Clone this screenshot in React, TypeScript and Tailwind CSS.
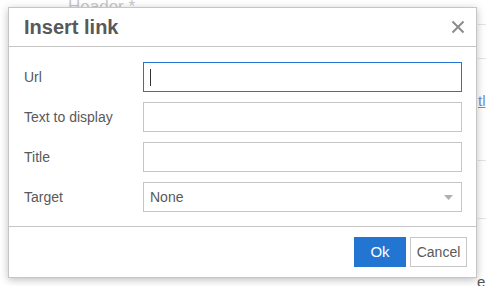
import React from "react";

export default function App() {
  return (
    <div className="relative h-[286px] w-[486px] overflow-hidden bg-white font-['Liberation_Sans',Arial,sans-serif]">
      {/* page behind the dialog */}
      <div className="absolute left-[68px] top-[-6px] text-[17px] text-[#c8c8c8]">Header *</div>
      <div className="absolute left-[478px] top-[24px] h-px w-[8px] bg-[#e4e4e4]" />
      <div className="absolute left-[478px] top-[58px] h-px w-[8px] bg-[#e4e4e4]" />
      <div className="absolute left-[478px] top-[160px] h-px w-[8px] bg-[#e4e4e4]" />
      <div className="absolute left-[478px] top-[218px] h-px w-[8px] bg-[#e4e4e4]" />
      <div className="absolute left-[478px] top-[90px] text-[15px] text-[#6b8fe0] underline">tl</div>
      <div className="absolute left-[477px] top-[271px] text-[15px] text-[#555]">e</div>

      {/* dialog */}
      <div className="absolute left-[8px] top-[7px] flex h-[271px] w-[469px] flex-col border border-[#c5c5c5] bg-white text-[#595959] shadow-[0_2px_8px_rgba(0,0,0,0.25)]">
        <div className="flex h-[39px] shrink-0 items-center justify-between border-b border-[#c5c5c5] pl-[15px] pr-[10px]">
          <h1 className="text-[20px] font-bold leading-none text-[#595959]">Insert link</h1>
          <svg width="14" height="14" viewBox="0 0 14 14" className="mr-[1px]">
            <path d="M1.5 1.5 L12.5 12.5 M12.5 1.5 L1.5 12.5" stroke="#8b8b8b" strokeWidth="2" />
          </svg>
        </div>

        <div className="flex flex-1 flex-col gap-[10px] border-b border-[#c5c5c5] pl-[15px] pr-[14px] pt-[15px]">
          <div className="flex items-center">
            <label className="w-[119px] text-[14px]">Url</label>
            <div className="flex h-[30px] flex-1 items-center border border-[#2276d2] px-[6px]">
              <span className="h-[17px] w-px bg-[#333]" />
            </div>
          </div>
          <div className="flex items-center">
            <label className="w-[119px] text-[14px]">Text to display</label>
            <div className="h-[30px] flex-1 border border-[#c5c5c5]" />
          </div>
          <div className="flex items-center">
            <label className="w-[119px] text-[14px]">Title</label>
            <div className="h-[30px] flex-1 border border-[#c5c5c5]" />
          </div>
          <div className="flex items-center">
            <label className="w-[119px] text-[14px]">Target</label>
            <div className="flex h-[30px] flex-1 items-center justify-between border border-[#c5c5c5] pl-[6px] pr-[8px] text-[14px]">
              <span>None</span>
              <svg width="9" height="5" viewBox="0 0 9 5">
                <path d="M0 0 L9 0 L4.5 5 Z" fill="#b0b0b0" />
              </svg>
            </div>
          </div>
        </div>

        <div className="flex h-[50px] shrink-0 items-center justify-end gap-[4px] pr-[9px]">
          <button className="h-[30px] w-[52px] bg-[#2276d2] text-[15px] text-white">Ok</button>
          <button className="h-[30px] w-[57px] border border-[#c5c5c5] bg-white text-[14px] text-[#595959]">Cancel</button>
        </div>
      </div>
    </div>
  );
}
